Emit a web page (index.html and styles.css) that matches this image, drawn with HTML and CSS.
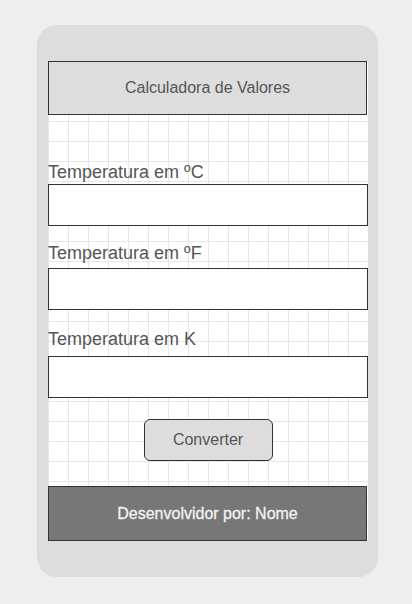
FILE: index.html
```html
<!DOCTYPE html>
<html lang="pt">
<head>
<meta charset="utf-8">
<title>Calculadora de Valores</title>
<link rel="stylesheet" href="styles.css">
</head>
<body>
<div class="phone">
  <div class="screen">
    <header class="top">Calculadora de Valores</header>
    <main class="form">
      <div class="field field-c">
        <label class="label" for="c">Temperatura em ºC</label>
        <input class="input" id="c" type="text">
      </div>
      <div class="field field-f">
        <label class="label" for="f">Temperatura em ºF</label>
        <input class="input" id="f" type="text">
      </div>
      <div class="field field-k">
        <label class="label" for="k">Temperatura em K</label>
        <input class="input" id="k" type="text">
      </div>
      <div class="actions">
        <button class="btn" type="button">Converter</button>
      </div>
    </main>
    <footer class="bottom">Desenvolvidor por: Nome</footer>
  </div>
</div>
</body>
</html>
```
FILE: styles.css
```css
html, body {
  margin: 0;
  padding: 0;
  background: #eeeeee;
}
body {
  font-family: "Liberation Sans", Arial, sans-serif;
  padding: 25px 0 0 37px;
}
.phone {
  width: 341px;
  box-sizing: border-box;
  padding: 36px 10px 36px 11px;
  background: #dddddd;
  border-radius: 20px;
}
.screen {
  width: 320px;
  background-color: #ffffff;
  background-image:
    linear-gradient(to right, #e6e6e6 1px, transparent 1px),
    linear-gradient(to bottom, #e6e6e6 1px, transparent 1px);
  background-size: 20px 20px;
  display: flex;
  flex-direction: column;
}
.top {
  width: 319px;
  height: 54px;
  box-sizing: border-box;
  border: 1px solid #333333;
  background: #dddddd;
  color: #555555;
  font-size: 16px;
  display: flex;
  align-items: center;
  justify-content: center;
}
.form {
  display: flex;
  flex-direction: column;
  padding-top: 47px;
}
.field {
  display: flex;
  flex-direction: column;
}
.field + .field {
  margin-top: 17px;
}
.label {
  font-size: 18px;
  line-height: 21px;
  color: #555555;
}
.field-c .label { margin-bottom: 1px; }
.field-f .label { margin-bottom: 4px; }
.field-k { margin-top: 19px !important; }
.field-k .label { margin-bottom: 6px; }
.input {
  width: 320px;
  height: 42px;
  box-sizing: border-box;
  margin: 0;
  border: 1px solid #333333;
  background: #ffffff;
  font: inherit;
  padding: 0 8px;
  outline: none;
}
.actions {
  display: flex;
  justify-content: center;
  margin-top: 21px;
}
.btn {
  width: 129px;
  height: 42px;
  box-sizing: border-box;
  border: 1px solid #333333;
  border-radius: 6px;
  background: #dddddd;
  color: #555555;
  font-family: "Liberation Sans", Arial, sans-serif;
  font-size: 16px;
  padding: 0;
}
.bottom {
  margin-top: 25px;
  width: 319px;
  height: 55px;
  box-sizing: border-box;
  border: 1px solid #333333;
  background: #777777;
  color: #f2f2f2;
  font-size: 16px;
  display: flex;
  align-items: center;
  justify-content: center;
  -webkit-text-stroke: 0.3px #f2f2f2;
}
```
